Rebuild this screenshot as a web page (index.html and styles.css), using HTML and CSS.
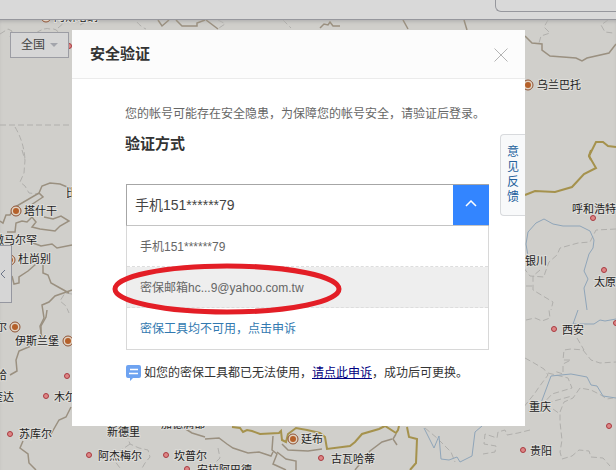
FILE: index.html
```html
<!DOCTYPE html>
<html lang="zh-CN">
<head>
    <meta charset="UTF-8">
    <meta name="viewport" content="width=device-width, initial-scale=1">
    <title>安全验证</title>
    <link rel="stylesheet" href="styles.css">
</head>
<body>
<div class="topbar"><div class="panel-edge"></div></div>
<div class="page">
    <!-- 地图 -->
    <svg class="map" width="616" height="450" viewBox="0 20 616 450" aria-hidden="true">
        <g class="border">
            <path d="M0 125H72M15 127Q24 142 25 160M0 34l8-5 4 2-2 6M36 33q9-6 14-4 6-1 9 4M58 28l8-7M80 25l9-5M137 22q4 5 9 7"/>
            <path d="M22 150l3 10-1 13-4 9 5 4 4 7 10 1M72 294l-7-1-5 8 6 5 3 7M218 20q8 4 7 4l-6 4M283 20l8 8"/>
            <path d="M548 20l-4 7 6 6-9 3-2 7M608 20l-7 5 4 7 8 1"/>
            <path d="M616 229l-20 1-6 12-12 1-18 5-3 7-8 7-4 11-1 4-14-1-7-9M540 270l-7 6v14l20 12-2 8M526 286h7"/>
            <path d="M526 320l9-2 7 3 8-3-1-8M525 358l9 5 10 6 4 6-9 12-4 6-12 15M548 373l20 5 4 10-20 6-10 11 12-4 18-5"/>
            <path d="M577 338l7 12-13-1-7 1-1 10 8 0-8 4v10l-9-3M583 350l8 10 9 3 16-1"/>
            <path d="M528 411l10-5 6 3 9 0 7 5 0 8 2 18-2 12 2 7M560 412l4-10 9-4 7-10 11 2 10 5 6 4 6-1M562 459l10-3 7-6 10 1 2 6 12 1 7 8"/>
            <path d="M530 430l-12 3-11 2-2-5-7 2-1 6-12-4-1 10 12 2-1 6-12 2M425 428l12 10 14 14 4 10"/>
            <path d="M126 433l4 11 9 4 9 2 2 7-5 6-4 7M130 444l-13 9-3 7 6 8M218 448l2 10-4 4 3 8"/>
        </g>
        <g class="road">
            <path d="M0 221l3 2 3-8h4l5-8 24-14 4 4-18 12M39 193l3-7 8-3 10 1 12 5"/>
            <path d="M7 232h8l1-9 6-2 5 1 5-5 4 5-4 5 8 2 15 2 5-5 9-5-8-5-8 3-9-2M33 243l8 3 11-2 5 4 15-3"/>
            <path d="M12 276l2 8 5-1 0-6 9-6 8-7M43 265l0 8 5 2 3 8 9 5 9 5M72 290l-17 6-6 6-7 3 2 13-4 8 2 12"/>
            <path d="M47 310l-1 7-5 9 0 8M31 346l-12 5-3 9 1 11-7 4M71 407l-5 10-7 3-8 14M23 441l-3 7 8 6 1 9 7 7M158 20l4 6 7-6M176 20l6 6 15 0 0-3 8-3M206 20l12 9M320 28l4-4 4 1 2-3 3 4 7 0M403 20l5 9M464 20l3 10M525 36l7 7 10 1 0 6 8 6 26 2 6 3 5-3 22-5 7-9"/>
            <path d="M205 439l14-1 8 6 6 4 15 5 11-1 12 4 2-4M184 428l8 5 13 4M273 436l-1 14 5 4-4 10 13 6"/>
            <path d="M282 444l6 6 20 1 14-2M277 452l9 7 10 2v9M392 439l-10 3-12 9-15 19M396 434l-3 5 4 6"/>
        </g>
        <g class="coast">
            <path d="M232 427l8 1 3 4 4-2 5 1 8 3 19-1 2-2 1 9 4 2 2-8 8-6 11 2 13 3 5 4 2 12 23-3 5-4 7-8 17-5 6-3 11 7 2-3 1-4M407 427l2 10 8 2-1 24-6 7"/>
            <path d="M525 195l10-4 20 1 17-5 12-13 12-6-7-12 2-6"/>
            <path d="M616 147l-8-1-5-4h-7l-7 14 2 4"/>
        </g>
        <g class="river">
            <path d="M528 256l-2-12 2-12 8-9 8-4 9 5 10 2 17 0 10 5 4 9-1 8-4 6-5 17 4 8-4 9 3 22"/>
            <path d="M578 310l-5 14 21 0 6-4 5 1 11-2M541 403l10-27 20-2 16 3 4 8 6 1 6 10 13 2M424 428l10 20 5-12 2 23 8 1 8-3 3 5 12-6 3-24 7-6"/>
        </g>
        <g class="capital">
            <circle class="ring" cx="16" cy="211" r="5"/><circle cx="16" cy="211" r="3"/>
            <circle class="ring" cx="10" cy="260" r="5"/><circle cx="10" cy="260" r="3"/>
            <circle class="ring" cx="15" cy="327" r="5"/><circle cx="15" cy="327" r="3"/>
            <circle class="ring" cx="68" cy="341" r="5"/><circle cx="68" cy="341" r="3"/>
            <circle class="ring" cx="293" cy="439" r="5"/><circle cx="293" cy="439" r="3"/>
            <circle class="ring" cx="528" cy="85" r="5"/><circle cx="528" cy="85" r="3"/>
            <circle class="ring" cx="46" cy="17" r="5"/><circle cx="46" cy="17" r="3"/>
        </g>
        <g class="city">
            <circle cx="69" cy="46" r="2.5"/><circle cx="67" cy="376" r="2.5"/><circle cx="46" cy="396" r="2.5"/><circle cx="10" cy="434" r="2.5"/>
            <circle cx="89" cy="455" r="2.5"/><circle cx="166" cy="455" r="2.5"/><circle cx="187" cy="469" r="2.5"/><circle cx="321" cy="458" r="2.5"/>
            <circle cx="593" cy="218" r="2.5"/><circle cx="604" cy="270" r="2.5"/><circle cx="554" cy="329" r="2.5"/><circle cx="609" cy="426" r="2.5"/>
            <circle cx="523" cy="450" r="2.5"/><circle cx="616" cy="323" r="2.5"/>
        </g>
        <g class="names">
            <text x="54" y="21">阿斯塔纳</text>
            <text x="24" y="215">塔什干</text>
            <text x="66" y="197">比</text>
            <text x="-7" y="244">撒马尔罕</text>
            <text x="18" y="263">杜尚别</text>
            <text x="-26" y="331">喀布尔</text>
            <text x="15" y="345">伊斯兰堡</text>
            <text x="-26" y="379">坎大哈</text>
            <text x="-8" y="401">奎达</text>
            <text x="54" y="401">木尔坦</text>
            <text x="19" y="438">苏库尔</text>
            <text x="107" y="436">新德里</text>
            <text x="161" y="428">加德满都</text>
            <text x="98" y="460">阿杰梅尔</text>
            <text x="174" y="460">坎普尔</text>
            <text x="197" y="474">安拉阿巴德</text>
            <text x="301" y="443">廷布</text>
            <text x="331" y="463">古瓦哈蒂</text>
            <text x="537" y="89">乌兰巴托</text>
            <text x="572" y="213">呼和浩特</text>
            <text x="525" y="265">银川</text>
            <text x="594" y="286">太原</text>
            <text x="562" y="334">西安</text>
            <text x="529" y="411">重庆</text>
            <text x="530" y="455">贵阳</text>
        </g>
    </svg>

    <button class="region" type="button">全国<span class="caret"></span></button>
    <button class="side-toggle" type="button" aria-label="展开">
        <svg width="6" height="10" viewBox="0 0 6 10"><path d="M5 1L1 5l4 4"/></svg>
    </button>

    <section class="dialog" role="dialog" aria-labelledby="title">
        <header class="dialog-head">
            <h1 id="title">安全验证</h1>
            <button class="close" type="button" aria-label="关闭">
                <svg width="14" height="14" viewBox="0 0 14 14"><path d="M0.5 0.5l13 13M13.5 0.5l-13 13"/></svg>
            </button>
        </header>
        <div class="dialog-body">
            <p class="notice">您的帐号可能存在安全隐患，为保障您的帐号安全，请验证后登录。</p>
            <h2><label for="method">验证方式</label></h2>
            <div class="picker">
                <div class="field">
                    <select id="method">
                        <option>手机151******79</option>
                    </select>
                    <span class="arrow">
                        <svg width="12" height="7" viewBox="0 0 12 7"><path d="M1 6l5-5 5 5"/></svg>
                    </span>
                </div>
                <ul class="options">
                    <li><button type="button">手机151******79</button></li>
                    <li class="active"><button type="button">密保邮箱hc...9@yahoo.com.tw</button></li>
                    <li><a href="#">密保工具均不可用，点击申诉</a></li>
                </ul>
                <svg class="mark" width="232" height="54" viewBox="0 0 232 54" aria-hidden="true"><ellipse cx="116" cy="27" rx="112" ry="23"/></svg>
            </div>
            <p class="tip">
                <svg width="16" height="16" viewBox="0 0 16 16" aria-hidden="true">
                    <path class="bubble" d="M2 0h11q2 0 2 2v9q0 2-2 2H7l-3 3v-3H2q-2 0-2-2V2q0-2 2-2z"/>
                    <path class="lines" d="M4 4.5h8M3 8.5h9"/>
                </svg>
                <span>如您的密保工具都已无法使用，<a href="#">请点此申诉</a>，成功后可更换。</span>
            </p>
        </div>
        <a class="feedback" href="#">意见反馈</a>
    </section>
</div>
</body>
</html>
```
FILE: styles.css
```css
* {
    box-sizing: border-box;
    padding: 0;
    margin: 0;
}

body {
    min-height: 100vh;
    display: flex;
    flex-direction: column;
    overflow: hidden;
    background: #d0cfcb;
    font: 12px/20px "Liberation Sans", "Noto Sans CJK SC", sans-serif;
    color: #333;
}

button,
select {
    font: inherit;
    color: inherit;
    border: 0;
    background: none;
}

button {
    cursor: pointer;
}

svg {
    fill: none;
}

ul {
    list-style: none;
}

.topbar {
    height: 20px;
    display: flex;
    justify-content: flex-end;
    background: #d9d9d9;
    border-bottom: 1px solid #96979d;
}

.panel-edge {
    width: 121px;
    height: 12px;
    border: 1px solid #96979d;
    border-width: 0 0 1px 1px;
    border-bottom-left-radius: 6px;
}

.page {
    flex: 1;
    position: relative;
    padding: 10px 91px 44px 72px;
    overflow: hidden;
    box-shadow: inset 0 3px 4px -2px #a9a9a9;
}

/* map */
.map {
    position: absolute;
    top: 0;
    left: 0;
}

.border {
    stroke: #b0afac;
    stroke-dasharray: 6 3;
}

.road {
    stroke: #9a9080;
    stroke-width: 1.5;
}

.coast {
    stroke: #a5924d;
    stroke-width: 2;
}

.river {
    stroke: #8fa5b9;
}

.capital {
    fill: #b5602a;
}

.ring {
    fill: #e0d3c4;
    stroke: #8f5233;
}

.city {
    fill: #dd8585;
    stroke: #a93a40;
}

.names {
    font-family: "Noto Sans CJK SC", sans-serif;
    font-size: 11px;
    fill: #222;
    stroke: #dddcd8;
    stroke-width: 2;
    paint-order: stroke;
}

.region {
    position: absolute;
    top: 12px;
    left: 10px;
    width: 59px;
    height: 26px;
    display: flex;
    align-items: center;
    justify-content: center;
    gap: 5px;
    background: #d6d6d6;
    border: 1px solid #9c9da4;
    color: #444;
}

.caret {
    border: 4px solid transparent;
    border-top-color: #a3a5ac;
    border-bottom: 0;
}

.side-toggle {
    position: absolute;
    top: 225px;
    left: 0;
    width: 12px;
    height: 58px;
    display: flex;
    align-items: center;
    background: #d6d6d6;
    border: 1px solid #9597a0;
    border-left: 0;
}

.side-toggle svg {
    stroke: #6d7689;
}

/* dialog */
.dialog {
    position: relative;
    background: #fff;
}

.dialog-head {
    height: 49px;
    display: flex;
    align-items: center;
    justify-content: space-between;
    padding: 2px 17px 0 18px;
    background: #fcfcfc;
    border-bottom: 1px solid #ebebeb;
}

h1,
h2 {
    font-size: 15px;
    line-height: 20px;
}

h1 {
    padding-bottom: 2px;
}

.close {
    width: 14px;
    height: 14px;
}

.close svg {
    display: block;
    stroke: #b4b4b4;
}

.dialog-body {
    padding: 25px 36px 43px 53px;
}

.notice {
    color: #666;
    white-space: nowrap;
}

h2 {
    margin: 10px 0 30px;
}

.picker {
    position: relative;
    margin-left: 1px;
}

.field {
    height: 42px;
    display: flex;
    border: 1px solid #a6a6a6;
    border-bottom-color: #c4c4c4;
}

.field select {
    flex: 1;
    min-width: 0;
    padding-left: 8px;
    font-size: 14px;
    color: #444;
    appearance: none;
}

.arrow {
    width: 36px;
    display: flex;
    align-items: center;
    justify-content: center;
    margin-right: -1px;
    padding-bottom: 4px;
    background: #3385ff;
}

.arrow svg {
    stroke: #fff;
    stroke-width: 1.5;
}

.options {
    border: 1px solid #d8d8d8;
    border-top: 0;
}

.options li {
    height: 41px;
    display: flex;
    border-bottom: 1px dashed #ddd;
}

.options li:last-child {
    border-bottom: 0;
}

.options .active {
    background: #eee;
}

.options button,
.options a {
    flex: 1;
    padding: 1px 0 0 13px;
    line-height: 40px;
    text-align: left;
    color: #666;
    text-decoration: none;
}

.options a {
    color: #3279b0;
}

.mark {
    position: absolute;
    top: 78px;
    left: -15px;
    stroke: #e31e26;
    stroke-width: 5;
    pointer-events: none;
}

.tip {
    display: flex;
    align-items: center;
    gap: 2px;
    margin: 13px 0 0 1px;
    white-space: nowrap;
}

.tip svg {
    flex: none;
}

.tip a {
    color: #000080;
}

.bubble {
    fill: #6ea3f1;
}

.lines {
    stroke: #fff;
    stroke-width: 1.5;
}

.feedback {
    position: absolute;
    top: 104px;
    right: 0;
    width: 25px;
    padding: 10px 6px;
    background: #f8f9fa;
    border: 1px solid #d8dadd;
    border-right: 0;
    border-radius: 4px 0 0 4px;
    line-height: 15px;
    color: #23609c;
    text-decoration: none;
}
```
